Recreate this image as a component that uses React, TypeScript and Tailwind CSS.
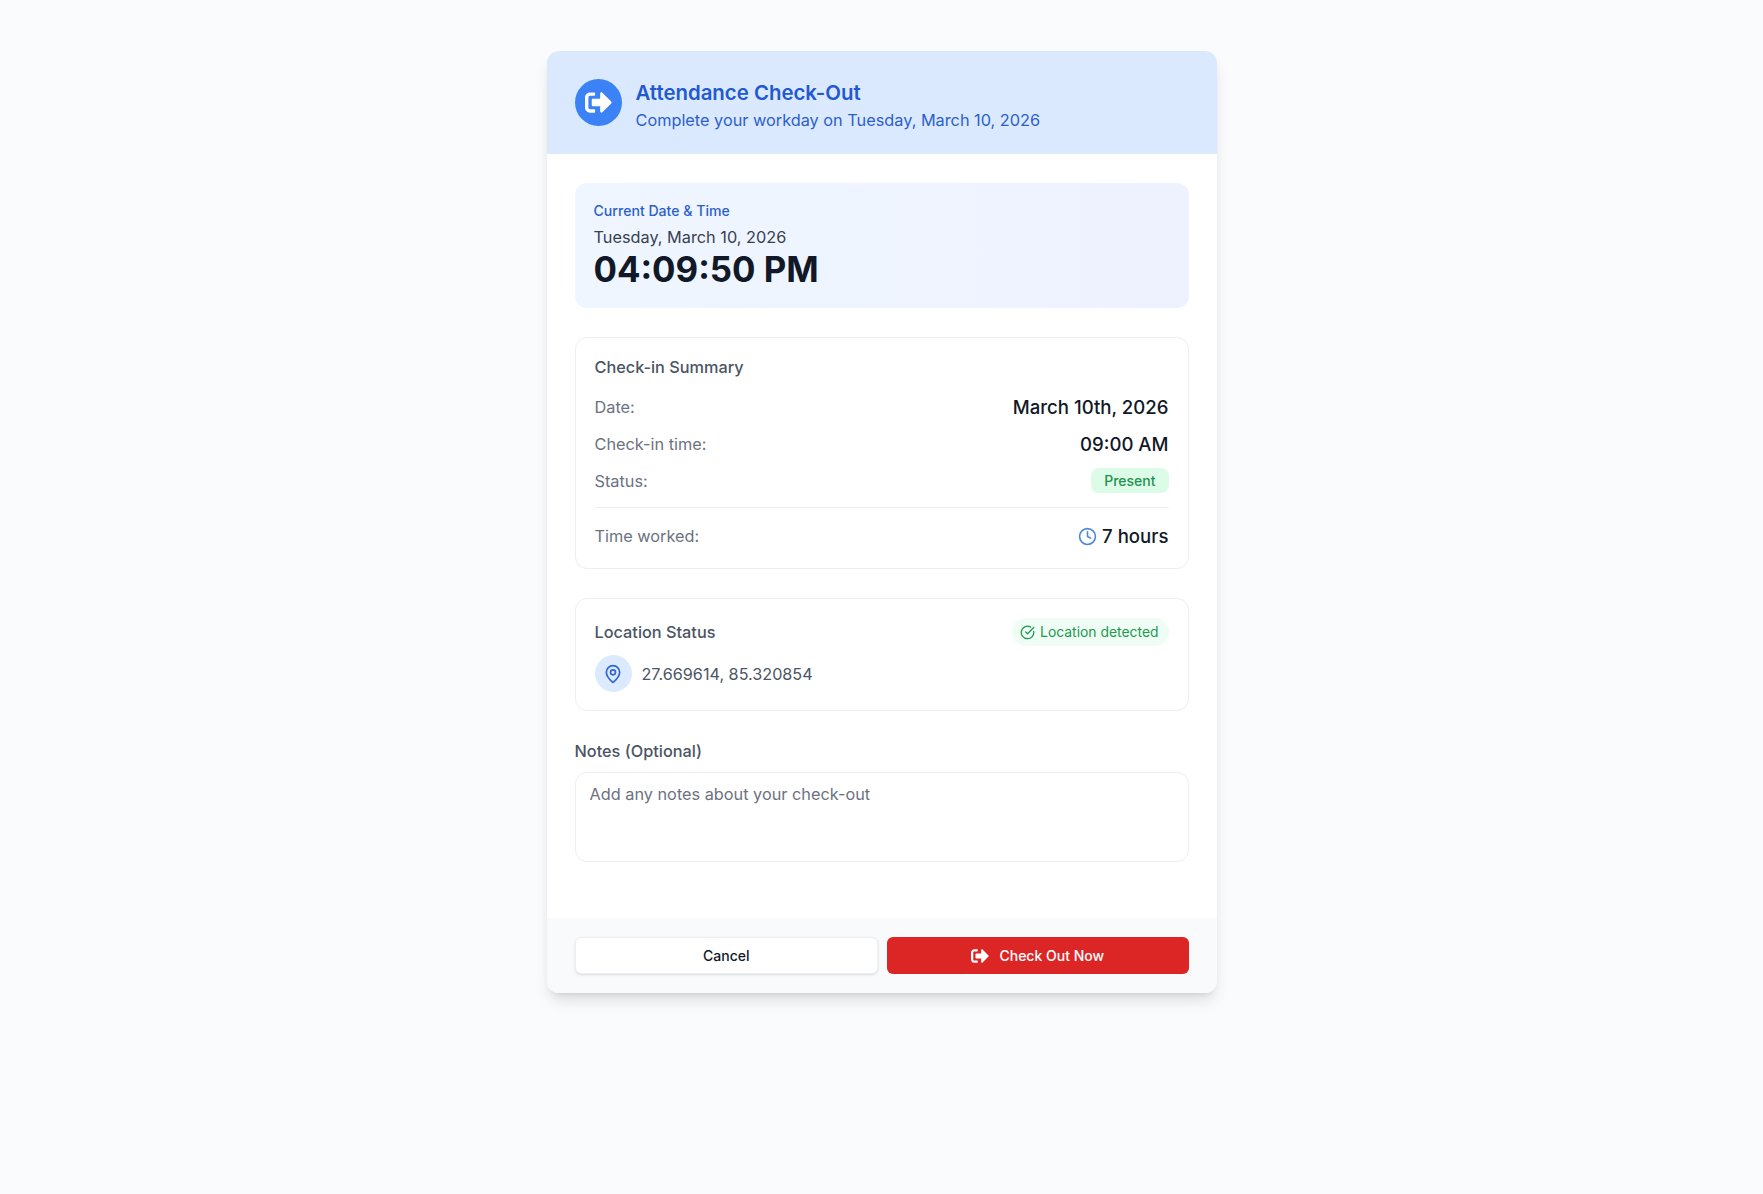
import { FaSignOutAlt } from "react-icons/fa";
import { CircleCheckBig, Clock, MapPin } from "lucide-react";

function Row({ label, value, className = "" }: { label: string; value: string; className?: string }) {
  return (
    <div className={`flex items-center justify-between ${className}`}>
      <span className="text-[16.3px] leading-6 text-[#6b7280]">{label}</span>
      <span className="text-[18.6px] leading-7 font-medium text-[#111827]">{value}</span>
    </div>
  );
}

export default function App() {
  return (
    <div className="min-h-[1194px] bg-[#fafbfd] pt-[51px] font-['Inter',sans-serif]">
      <div className="mx-auto w-[670px] overflow-hidden rounded-xl bg-white shadow-[0_10px_15px_-3px_rgba(0,0,0,0.12),0_4px_6px_-4px_rgba(0,0,0,0.12)]">
        <header className="flex h-[103px] items-center gap-3.5 bg-[#dbe9fe] px-7">
          <div className="flex h-[47px] w-[47px] items-center justify-center rounded-full bg-[#3b82f6] text-white">
            <FaSignOutAlt className="h-[27px] w-[27px]" />
          </div>
          <div className="pt-[7px]">
            <h1 className="text-[20.4px] leading-[26px] font-semibold text-[#2259cf]">Attendance Check-Out</h1>
            <p className="mt-px text-[16.3px] leading-[26px] text-[#2b60cc]">Complete your workday on Tuesday, March 10, 2026</p>
          </div>
        </header>

        <main className="px-7 pt-[29px] pb-14">
          <section className="rounded-xl bg-gradient-to-r from-[#eff6ff] to-[#eef2ff] px-[19px] pt-[18px] pb-5">
            <p className="text-[14.1px] leading-5 font-medium text-[#2b60cc]">Current Date &amp; Time</p>
            <p className="mt-1 text-[16.3px] leading-[25px] text-[#374151]">Tuesday, March 10, 2026</p>
            <p className="text-[34.8px] leading-[38px] font-bold text-[#111827]">04:09:50 PM</p>
          </section>

          <section className="mt-[29px] rounded-xl border border-[#eceef2] px-[19px] pt-[17px] pb-[18px]">
            <h2 className="text-[16.3px] leading-6 font-medium text-[#4b5563]">Check-in Summary</h2>
            <Row className="mt-3.5" label="Date:" value="March 10th, 2026" />
            <Row className="mt-[9px]" label="Check-in time:" value="09:00 AM" />
            <div className="mt-2.5 flex items-center justify-between">
              <span className="text-[16.3px] leading-6 text-[#6b7280]">Status:</span>
              <span className="h-[25px] rounded-lg bg-[#dcfce7] px-[13px] text-sm leading-[25px] font-medium text-[#1f9150]">Present</span>
            </div>
            <div className="mt-3.5 flex items-center justify-between border-t border-[#eceef2] pt-3.5">
              <span className="text-[16.3px] leading-6 text-[#6b7280]">Time worked:</span>
              <span className="flex items-center gap-[5px] text-[18.6px] leading-7 font-medium text-[#111827]">
                <Clock className="h-[19px] w-[19px] text-[#4f86dc]" />7 hours
              </span>
            </div>
          </section>

          <section className="mt-[29px] rounded-xl border border-[#eceef2] px-[19px] pt-[19px] pb-[18px]">
            <div className="flex items-center justify-between">
              <h2 className="text-[16.3px] leading-6 font-medium text-[#4b5563]">Location Status</h2>
              <span className="flex h-7 items-center gap-[5px] rounded-full bg-[#f0fdf4] pr-2.5 pl-2 text-[13.9px] leading-5 text-[#1a9a50]">
                <CircleCheckBig className="h-[15px] w-[15px]" />Location detected
              </span>
            </div>
            <div className="mt-[9px] flex items-center gap-2.5">
              <div className="flex h-[37px] w-[37px] items-center justify-center rounded-full bg-[#dbeafe]">
                <MapPin className="h-5 w-5 text-[#2f66d0]" />
              </div>
              <span className="text-[16.2px] leading-6 text-[#4b5563]">27.669614, 85.320854</span>
            </div>
          </section>

          <section className="mt-7">
            <label htmlFor="notes" className="block text-[16.3px] leading-6 font-medium text-[#4b5563]">Notes (Optional)</label>
            <textarea
              id="notes"
              rows={3}
              placeholder="Add any notes about your check-out"
              className="mt-[9px] block h-[90px] w-full resize-none rounded-xl border border-[#eceef2] px-3.5 py-[9px] text-[16.3px] leading-6 outline-none placeholder:text-[#6b7280]"
            />
          </section>
        </main>

        <footer className="flex gap-[9px] bg-[#f9fafb] px-7 py-[19px]">
          <button className="h-[37px] flex-1 rounded-md border border-[#eceef2] bg-white text-sm font-medium text-[#111827] shadow-sm">Cancel</button>
          <button className="flex h-[37px] flex-1 items-center justify-center gap-2.5 rounded-md bg-[#dc2626] text-sm font-medium text-white">
            <FaSignOutAlt className="h-[18px] w-[18px]" />Check Out Now
          </button>
        </footer>
      </div>
    </div>
  );
}
